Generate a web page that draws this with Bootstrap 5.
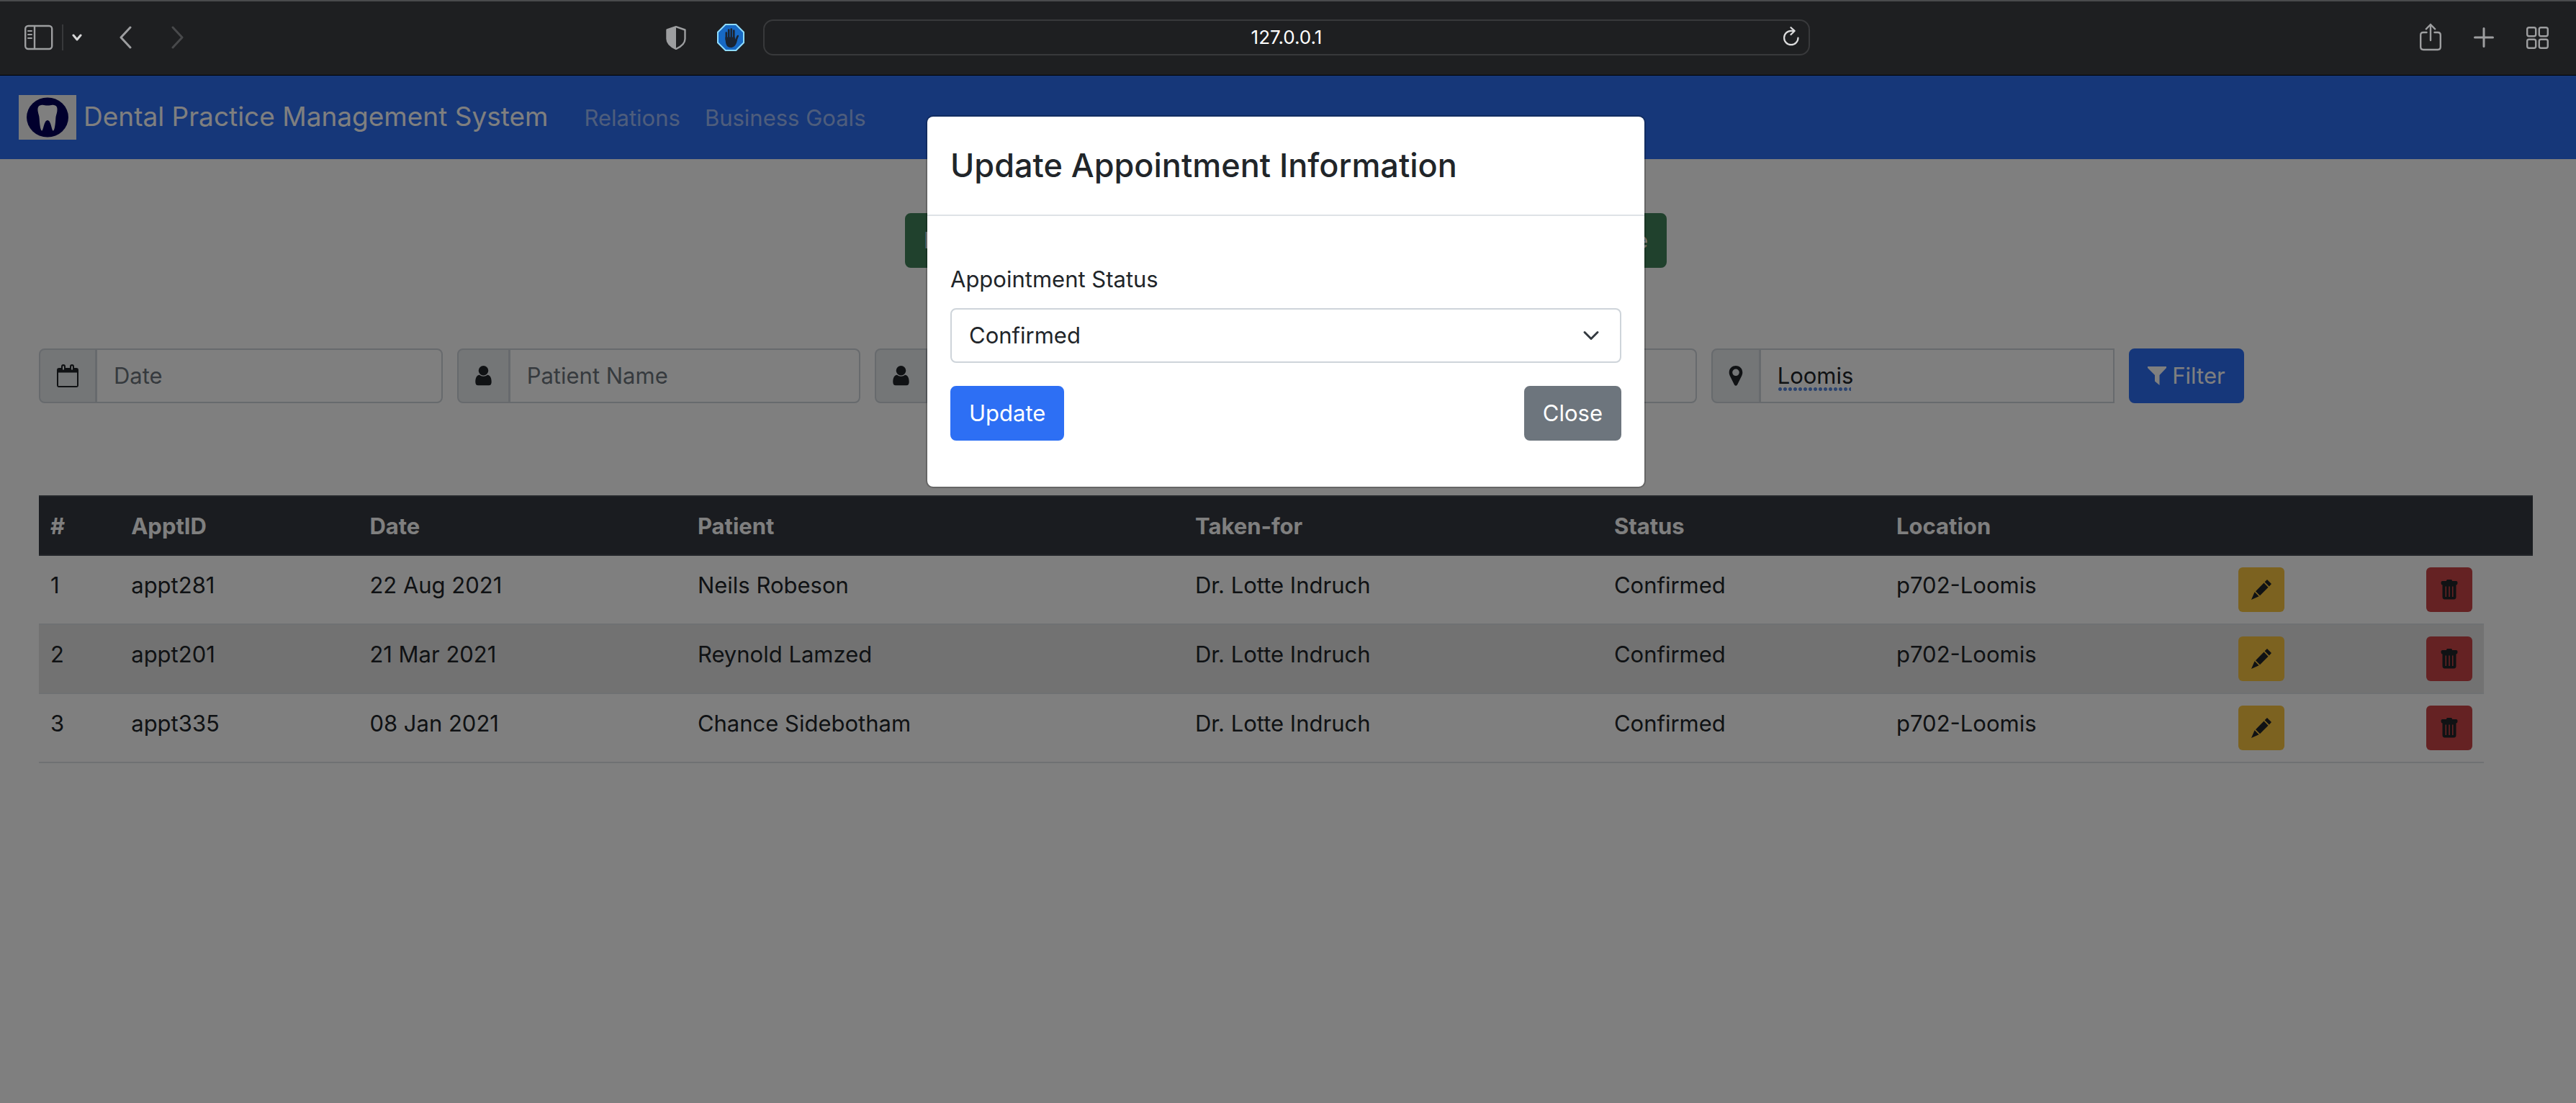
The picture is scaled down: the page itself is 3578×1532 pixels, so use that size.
<!DOCTYPE html>
<html lang="en">
<head>
<meta charset="utf-8">
<meta name="viewport" content="width=device-width, initial-scale=1">
<title>Dental Practice Management System</title>
<link href="https://cdn.jsdelivr.net/npm/bootstrap@5.3.0/dist/css/bootstrap.min.css" rel="stylesheet">
<style>
  /* the whole page is drawn at double scale: 1rem = 32px */
  html { font-size: 32px; }
  body { font-family: Inter, "Liberation Sans", sans-serif; font-size: 31px; line-height: 48px; color: #212529; }
  svg { display: block; flex: none; }

  /* browser toolbar */
  .toolbar { height: 105px; background: #1e1f21; border-top: 2px solid #4a4b4d; border-bottom: 1px solid #000; color: #9d9ea0; padding: 0 38px 2px 34px; }
  .toolbar button { background: none; border: 0; padding: 0; color: inherit; }
  .tool-side { flex: 1 1 0; gap: 12px; }
  .tool-side.tool-end { gap: 45px; }
  .split-line { width: 2px; height: 36px; background: #38393b; }
  .nav-arrows { margin-left: 40px; gap: 55px; }
  .shields { gap: 43px; margin-right: 26px; }
  .address { flex: 0 1 1454px; height: 50px; border: 2px solid #38393b; border-radius: 14px; }
  .address input { background: transparent; border: 0; color: #fff; font-size: 26px; line-height: 36px; padding: 0; text-align: center; width: 100%; outline: 0; }
  .address button { right: 12px; top: 8px; }

  /* page */
  .app-nav { background: #2c6ef2; min-height: 116px; padding: 0 26px; gap: 50px; }
  .brand { color: #fff; text-decoration: none; font-size: 37px; gap: 10px; }
  .brand span { padding-bottom: 3px; }
  .app-nav .nav-link { color: rgba(255,255,255,.55); padding: 2px 0 0; }
  .app-nav .nav { gap: 34px; }
  .page-body { padding: 75px 60px 0 54px; }
  .btn, .form-control, .form-select, .input-group-text { font-size: 31px; line-height: 48px; padding: 12px 24px; border-width: 2px; border-radius: 8px; }
  .banner-btn { background: #40825a; border-color: #40825a; color: #fff; width: 1058px; white-space: nowrap; }
  .btn-primary { background: #2d6ff4; border-color: #2d6ff4; }
  .btn-secondary { background: #6d757d; border-color: #6d757d; }
  .filters { --bs-gutter-x: 20px; margin-top: 112px; margin-bottom: 128px; }
  .input-group-text { background: #e9ecef; border-color: #ced4da; color: #212529; padding: 12px 22px; }
  .filters .form-control { background: #fff; border-color: #ced4da; padding-left: 23px; }
  .filters .form-control::placeholder { color: #6c757d; }
  .filters .btn { gap: 8px; }
  .spell { position: absolute; left: 93px; bottom: 17px; width: 102px; height: 5px; z-index: 6; background: radial-gradient(circle, #5a8ae0 2px, transparent 3px) 0 0 / 7px 5px repeat-x; }

  .appts { table-layout: fixed; --bs-table-bg: transparent; color: #212529; }
  .appts > :not(caption) > * > * { padding: 16px; border-bottom: 2px solid #dee2e6; vertical-align: top; line-height: 50px; }
  .appts > thead > tr > th { background: #343840; color: #fff; border-top: 2px solid #454b53; border-bottom-color: #454b53; padding-bottom: 14px; }
  .appts tbody tr:nth-child(even) td { background: #e5e5e5; }
  .appts > tbody > tr > td.spare { background: none; border-bottom: 0; padding: 0; }
  .icon-btn { width: 64px; height: 62px; padding: 0; border: 0; border-radius: 6px; display: flex; align-items: center; justify-content: center; color: #212529; }
  .btn-edit { background: #f8c440; }
  .btn-del { background: #ca4446; }
  .c-num { width: 3.24%; } .c-id { width: 9.56%; } .c-date { width: 13.15%; } .c-patient { width: 19.95%; }
  .c-for { width: 16.8%; } .c-status { width: 11.32%; } .c-loc { width: 13.71%; } .c-edit { width: 7.53%; }
  .c-del { width: 2.77%; } .c-spare { width: 1.97%; }

  .shade { position: absolute; inset: 0; background: #000; opacity: .5; z-index: 10; }
  .dialog-layer { position: absolute; top: 55px; left: 0; right: 6px; z-index: 11; }
  .dialog { width: 1000px; margin: 0 auto; border: 2px solid rgba(0,0,0,.2); border-radius: 10px; background: #fff; background-clip: padding-box; }
  .dialog .modal-header { padding: 32px; border-bottom: 2px solid #dee2e6; }
  .dialog .modal-title { font-size: 45px; line-height: 72px; font-weight: 500; }
  .dialog .modal-body { padding: 64px 32px; }
  .dialog .form-label { margin-bottom: 16px; }
  .dialog .form-select { border-color: #ced4da; margin-bottom: 32px; background-size: 32px 24px; }
</style>
<script src="https://cdn.jsdelivr.net/npm/bootstrap@5.3.0/dist/js/bootstrap.bundle.min.js"></script>
</head>
<body class="d-flex flex-column min-vh-100">

<svg width="0" height="0" class="position-absolute" aria-hidden="true">
  <symbol id="i-user" viewBox="0 0 24 28"><path d="M12 0a6.700 6.700 0 1 1 0 13.600A6.700 6.700 0 0 1 12 0zM6.500 12.800c3 2.600 8 2.600 11 0 4.400.4 5.700 5 5.700 9.600 0 3.200-1.400 4.900-3.800 4.900H4.600C2.200 27.300.8 25.600.8 22.400c0-4.600 1.300-9.200 5.700-9.600z" fill="currentColor"/></symbol>
  <symbol id="i-pencil" viewBox="0 0 28 28"><path d="M22 0l6 6-3.200 3.500-6.200-6.200zM17.500 4.600l6 6.100L12 22.200l-6-6zM4.600 17.300l6 6L0 28z" fill="currentColor"/></symbol>
  <symbol id="i-trash" viewBox="0 0 24 28"><path fill-rule="evenodd" d="M8 2c0-1.400.7-2 2-2h4c1.300 0 2 .6 2 2h5.500C23 2 23.500 3 23.500 4.500S23 7.500 21.500 7.500V24c0 2-1 3.500-3 3.500h-13c-2 0-3-1.500-3-3.500V7.500C1 7.500.5 6 .5 4.500S1 2 2.500 2zM6.500 9.500v14.500H8V9.500zM11.200 9.500v14.500h1.600V9.500zM16 9.500v14.500h1.500V9.500z" fill="currentColor"/></symbol>
</svg>

<header class="toolbar d-flex align-items-center">
  <div class="tool-side d-flex align-items-center">
    <button type="button" aria-label="Sidebar"><svg width="40" height="36" viewBox="0 0 40 36" fill="none" stroke="currentColor" stroke-width="2.400"><rect x="1.200" y="2" width="37" height="32" rx="4"/><path d="M14 2v32"/><path d="M5 9h5M5 14h5M5 19h5" stroke-width="2" stroke-linecap="round"/></svg></button>
    <span class="split-line"></span>
    <button type="button" aria-label="Tab groups"><svg width="14" height="11" viewBox="0 0 14 11" fill="none" stroke="#d6d6d7" stroke-width="3" stroke-linecap="round" stroke-linejoin="round"><path d="M2 2l5 6 5-6"/></svg></button>
    <div class="nav-arrows d-flex">
      <button type="button" aria-label="Back"><svg width="17" height="32" viewBox="0 0 17 32" fill="none" stroke="currentColor" stroke-width="3" stroke-linecap="round" stroke-linejoin="round"><path d="M15 2L2 16l13 14"/></svg></button>
      <button type="button" aria-label="Forward"><svg width="17" height="32" viewBox="0 0 17 32" fill="none" stroke="#48494b" stroke-width="3" stroke-linecap="round" stroke-linejoin="round"><path d="M2 2l13 14L2 30"/></svg></button>
    </div>
    <div class="shields d-flex align-items-center ms-auto">
      <button type="button" aria-label="Privacy report"><svg width="28" height="33" viewBox="0 0 28 33"><path d="M14 1.200L26.500 5.500V18c0 6.500-5 10.500-12.500 14C6.500 28.500 1.500 24.500 1.500 18V5.500z" fill="none" stroke="currentColor" stroke-width="2.400" stroke-linejoin="round"/><path d="M14 1L1.500 5.500V18c0 6.500 5 10.500 12.500 14z" fill="currentColor"/></svg></button>
      <button type="button" aria-label="Content blocker"><svg width="38" height="38" viewBox="0 0 38 38"><path d="M11.700 1h14.600L37 11.700v14.600L26.300 37H11.700L1 26.300V11.700z" fill="#1769c4" stroke="#8fdcff" stroke-width="2"/><g fill="none" stroke="#1b2431" stroke-linecap="round" stroke-width="2.600"><path d="M12.800 22V12.500M16.200 20V8.500M19.800 20V7.500M23.300 20V9.500"/><path d="M25.500 24l3.300-7"/></g><path d="M11.500 18.500h13.100l.8 4 3.600-5.500c-1 6-1.600 16-10 16-6 0-7.500-5-7.500-14.500z" fill="#1b2431"/></svg></button>
    </div>
  </div>
  <div class="address position-relative d-flex align-items-center">
    <input type="text" value="127.0.0.1" aria-label="Address">
    <button type="button" class="position-absolute" aria-label="Reload"><svg width="24" height="27" viewBox="0 0 24 27" fill="none" stroke="#dcdcdd" stroke-width="2.200" stroke-linecap="round" stroke-linejoin="round"><path d="M21.500 15.500a9.700 9.700 0 1 1-9.700-9.700h4.500"/><path d="M11.500 1.200l5 4.700-5 5.100"/></svg></button>
  </div>
  <div class="tool-side tool-end d-flex align-items-center justify-content-end">
    <button type="button" aria-label="Share"><svg width="30" height="40" viewBox="0 0 30 40" fill="none" stroke="currentColor" stroke-width="2.400" stroke-linecap="round" stroke-linejoin="round"><path d="M9.500 13H5q-3.800 0-3.800 3.800V33q0 4 3.800 4h20q3.800 0 3.800-4V16.800q0-3.800-3.800-3.800h-4.500"/><path d="M15 24V2M8.800 8.300L15 2l6.200 6.300"/></svg></button>
    <button type="button" aria-label="New tab"><svg width="28" height="28" viewBox="0 0 28 28" stroke="currentColor" stroke-width="3" stroke-linecap="round"><path d="M14 1.500v25M1.500 14h25"/></svg></button>
    <button type="button" aria-label="Tab overview"><svg width="31" height="31" viewBox="0 0 31 31" fill="none" stroke="currentColor" stroke-width="2.400"><rect x="1.200" y="1.200" width="12" height="12" rx="2.500"/><rect x="17.800" y="1.200" width="12" height="12" rx="2.500"/><rect x="1.200" y="17.800" width="12" height="12" rx="2.500"/><rect x="17.800" y="17.800" width="12" height="12" rx="2.500"/></svg></button>
  </div>
</header>

<div class="flex-grow-1 position-relative">
  <nav class="app-nav d-flex align-items-center">
    <a href="#" class="brand d-flex align-items-center">
      <svg width="80" height="62" viewBox="0 0 80 62" aria-hidden="true"><rect width="80" height="62" fill="#f6f6f6"/><ellipse cx="40" cy="31" rx="29" ry="27.500" fill="#02005a"/><path d="M31 14c4-.8 5 .6 9 .6s5.500-1.400 9-.6c4.500.8 5 4.500 4.300 9-.6 4-1.800 5.500-2 10-.3 6-1.300 16-3.300 16.600-2.200.6-3-14.600-8-14.600s-5.800 15.200-8 14.600c-2-.6-3-10.600-3.300-16.600-.2-4.500-1.400-6-2-10C26 18.500 26.500 14.800 31 14z" fill="#fff"/></svg>
      <span>Dental Practice Management System</span>
    </a>
    <div class="nav">
      <a href="#" class="nav-link">Relations</a>
      <a href="#" class="nav-link">Business Goals</a>
    </div>
  </nav>

  <main class="page-body">
    <div class="d-flex justify-content-center">
      <button type="button" class="btn banner-btn d-flex justify-content-between"><span>Enter any of the details below</span><span>to filter the appointments table</span></button>
    </div>

    <form class="row filters">
      <div class="col-2"><div class="input-group">
        <label class="input-group-text" for="f-date"><svg width="32" height="32" viewBox="0 0 32 32"><path fill-rule="evenodd" d="M4 5h3V3q0-3 3-3t3 3v2h6V3q0-3 3-3t3 3v2h3q3 0 3 3v21q0 3-3 3H4q-3 0-3-3V8q0-3 3-3zM3 11.500V30h26V11.500zM9 2.500v5h2v-5zM21 2.500v5h2v-5z" fill="currentColor"/></svg></label>
        <input type="text" class="form-control" id="f-date" placeholder="Date">
      </div></div>
      <div class="col-2"><div class="input-group">
        <label class="input-group-text" for="f-patient"><svg width="25" height="28"><use href="#i-user"/></svg></label>
        <input type="text" class="form-control" id="f-patient" placeholder="Patient Name">
      </div></div>
      <div class="col-2"><div class="input-group">
        <label class="input-group-text" for="f-doctor"><svg width="25" height="28"><use href="#i-user"/></svg></label>
        <input type="text" class="form-control" id="f-doctor" aria-label="Taken for">
      </div></div>
      <div class="col-2"><div class="input-group">
        <label class="input-group-text" for="f-status"><svg width="25" height="28"><use href="#i-user"/></svg></label>
        <input type="text" class="form-control" id="f-status" aria-label="Status">
      </div></div>
      <div class="col-2"><div class="input-group">
        <label class="input-group-text" for="f-location"><svg width="20" height="28" viewBox="0 0 20 28"><path fill-rule="evenodd" d="M10 0c5.500 0 9.300 4 9.300 9.300 0 2-.5 3.300-1.100 4.700L12 26.500Q10 29 8 26.500L1.800 14C1.200 12.600.7 11.300.7 9.300.7 4 4.500 0 10 0zM10 4.500a4.800 4.800 0 1 0 0 9.600 4.800 4.800 0 0 0 0-9.600z" fill="currentColor"/></svg></label>
        <input type="text" class="form-control" id="f-location" value="Loomis">
        <span class="spell"></span>
      </div></div>
      <div class="col-2">
        <button type="button" class="btn btn-primary d-inline-flex align-items-center"><svg width="26" height="26" viewBox="0 0 26 26"><path d="M0 0h26v2L16.500 12v14L10 20.500V12L0 2z" fill="currentColor"/></svg>Filter</button>
      </div>
    </form>

    <table class="table appts mb-0">
      <colgroup><col class="c-num"><col class="c-id"><col class="c-date"><col class="c-patient"><col class="c-for"><col class="c-status"><col class="c-loc"><col class="c-edit"><col class="c-del"><col class="c-spare"></colgroup>
      <thead><tr><th>#</th><th>ApptID</th><th>Date</th><th>Patient</th><th>Taken-for</th><th>Status</th><th>Location</th><th></th><th></th><th></th></tr></thead>
      <tbody>
        <tr><td>1</td><td>appt281</td><td>22 Aug 2021</td><td>Neils Robeson</td><td>Dr. Lotte Indruch</td><td>Confirmed</td><td>p702-Loomis</td>
          <td><button type="button" class="icon-btn btn-edit" aria-label="Edit"><svg width="28" height="28"><use href="#i-pencil"/></svg></button></td>
          <td><button type="button" class="icon-btn btn-del" aria-label="Delete"><svg width="24" height="28"><use href="#i-trash"/></svg></button></td><td class="spare"></td></tr>
        <tr><td>2</td><td>appt201</td><td>21 Mar 2021</td><td>Reynold Lamzed</td><td>Dr. Lotte Indruch</td><td>Confirmed</td><td>p702-Loomis</td>
          <td><button type="button" class="icon-btn btn-edit" aria-label="Edit"><svg width="28" height="28"><use href="#i-pencil"/></svg></button></td>
          <td><button type="button" class="icon-btn btn-del" aria-label="Delete"><svg width="24" height="28"><use href="#i-trash"/></svg></button></td><td class="spare"></td></tr>
        <tr><td>3</td><td>appt335</td><td>08 Jan 2021</td><td>Chance Sidebotham</td><td>Dr. Lotte Indruch</td><td>Confirmed</td><td>p702-Loomis</td>
          <td><button type="button" class="icon-btn btn-edit" aria-label="Edit"><svg width="28" height="28"><use href="#i-pencil"/></svg></button></td>
          <td><button type="button" class="icon-btn btn-del" aria-label="Delete"><svg width="24" height="28"><use href="#i-trash"/></svg></button></td><td class="spare"></td></tr>
      </tbody>
    </table>
  </main>

  <div class="shade"></div>
  <div class="dialog-layer">
    <div class="dialog" role="dialog" aria-labelledby="dlg-title">
      <div class="modal-header"><h2 class="modal-title" id="dlg-title">Update Appointment Information</h2></div>
      <form class="modal-body">
        <label class="form-label d-block" for="d-status">Appointment Status</label>
        <select class="form-select" id="d-status"><option selected>Confirmed</option></select>
        <div class="d-flex justify-content-between">
          <button type="button" class="btn btn-primary">Update</button>
          <button type="button" class="btn btn-secondary">Close</button>
        </div>
      </form>
    </div>
  </div>
</div>
</body>
</html>
